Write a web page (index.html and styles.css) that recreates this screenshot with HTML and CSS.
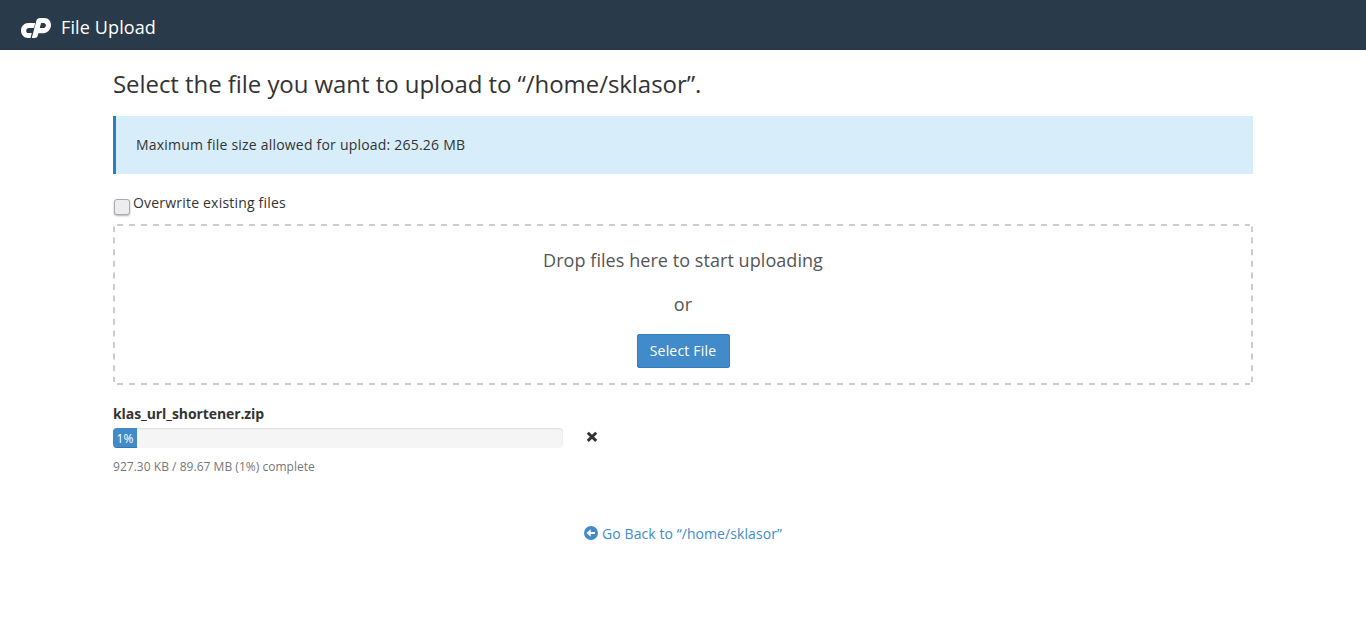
FILE: index.html
```html
<!DOCTYPE html>
<html lang="en">
<head>
<meta charset="utf-8">
<title>File Upload</title>
<link rel="stylesheet" href="styles.css">
</head>
<body>
<header class="navbar">
  <svg class="logo" viewBox="0 0 30 20" width="30" height="20" fill="#fff" aria-hidden="true">
    <path d="M14.200 5H7.400C3.200 5 0 8.300 0 12.500C0 16.800 3 20 7 20H9.500L10.800 15.100H7.300C5.900 15.100 5.200 14 5.200 12.700C5.200 11.200 6.300 10 7.800 10H12.900Z"/>
    <path d="M10.800 20L15.400 2.600C15.800 1 17.300 0 19 0H23.500C27.500 0 30 3.300 30 7C30 11.500 26.500 15.200 22.500 15.200H17.400L18.700 10.100H22.200C23.800 10.100 24.900 8.800 24.900 7.400C24.900 6 23.900 5.100 22.700 5.100H20.100L16.700 17.800C16.300 19.200 15.200 20 13.700 20Z"/>
  </svg>
  <span class="brand">File Upload</span>
</header>
<main class="container">
  <h1 class="title">Select the file you want to upload to “/home/sklasor”.</h1>
  <div class="callout">Maximum file size allowed for upload: 265.26 MB</div>
  <label class="overwrite"><span class="checkbox"></span>Overwrite existing files</label>
  <section class="dropzone">
    <svg class="dash-border" width="1140" height="161" aria-hidden="true">
      <g stroke="#ccc" stroke-width="2" fill="none">
        <path d="M4 1H1137" stroke-dasharray="6 6"/>
        <path d="M4 160H1137" stroke-dasharray="6 6"/>
        <path d="M1 2.500V158" stroke-dasharray="6 5.600" stroke-dashoffset="0.500"/>
        <path d="M1139 2.500V158" stroke-dasharray="6 5.600" stroke-dashoffset="0.500"/>
      </g>
    </svg>
    <p class="drop-text">Drop files here to start uploading</p>
    <p class="drop-text">or</p>
    <button class="btn" type="button">Select File</button>
  </section>
  <section class="upload">
    <div class="filename">klas_url_shortener.zip</div>
    <div class="progress-row">
      <div class="progress"><div class="bar">1%</div></div>
      <svg class="cancel" viewBox="0 0 12 12" width="12" height="12" aria-hidden="true"><path d="M2.300 2.200L9.700 9.300M9.700 2.200L2.300 9.300" stroke="#333" stroke-width="3.500" stroke-linecap="square" transform="translate(.9 .9) scale(.85)"/></svg>
    </div>
    <div class="status">927.30 KB / 89.67 MB (1%) complete</div>
  </section>
  <a class="back">
    <svg viewBox="0 0 14 14" width="14" height="14" aria-hidden="true"><circle cx="7" cy="7" r="7" fill="#428bca"/><path d="M2.500 7L6.700 3.200V5.900H11V8.100H6.700V10.800Z" fill="#fff"/></svg>
    <span>Go Back to “/home/sklasor”</span>
  </a>
</main>
</body>
</html>
```
FILE: styles.css
```css
* { box-sizing: border-box; }
body {
  margin: 0;
  background: #fff;
  color: #333;
  font: 14px/20px "Open Sans", sans-serif;
}
.navbar {
  display: flex;
  align-items: flex-start;
  gap: 10px;
  height: 50px;
  padding: 17px 21px 0;
  background: #293a4a;
}
.logo { margin-top: 1px; }
.brand {
  color: #fff;
  font-size: 18px;
  line-height: 20px;
  letter-spacing: .12px;
}
.container {
  display: flex;
  flex-direction: column;
  width: 1140px;
  margin: 0 auto;
}
.title {
  margin: 20px 0 18px;
  font-size: 24px;
  font-weight: 400;
  line-height: 28px;
  letter-spacing: -.06px;
}
.callout {
  height: 58px;
  padding: 19px 20px;
  border-left: 3px solid #2980b9;
  background: #d7edf9;
  letter-spacing: .21px;
}
.overwrite {
  display: flex;
  gap: 3px;
  height: 31px;
  margin-top: 19px;
  padding-left: 1px;
  letter-spacing: .2px;
}
.checkbox {
  width: 16px;
  height: 16px;
  margin-top: 6px;
  border: 1px solid #aaa;
  border-radius: 3px;
  background: #ededf0;
  box-shadow: 0 1px 2px rgba(0, 0, 0, .3);
}
.dropzone {
  position: relative;
  display: flex;
  flex-direction: column;
  align-items: center;
  height: 161px;
  padding-top: 24px;
}
.dash-border {
  position: absolute;
  inset: 0;
}
.drop-text {
  margin: 0 0 19px;
  color: #555;
  font-size: 18px;
  line-height: 25px;
  letter-spacing: .06px;
}
.btn {
  width: 93px;
  height: 34px;
  margin-top: -2px;
  padding: 0;
  border: 1px solid #357ebd;
  border-radius: 2px;
  background: #428bca;
  color: #fff;
  font: inherit;
  letter-spacing: .2px;
}
.upload { padding-top: 19px; }
.filename {
  font-weight: 700;
  letter-spacing: -.09px;
}
.progress-row {
  display: flex;
  gap: 23px;
  height: 20px;
  margin-top: 4px;
}
.progress {
  width: 450px;
  overflow: hidden;
  border-radius: 4px;
  background: #f5f5f5;
  box-shadow: inset 0 1px 2px rgba(0, 0, 0, .1);
}
.bar {
  width: 24px;
  height: 20px;
  padding-top: 1px;
  background: #428bca;
  box-shadow: inset 0 -1px 0 rgba(0, 0, 0, .15);
  color: #fff;
  font-size: 12px;
  line-height: 20px;
  text-align: center;
}
.cancel { margin-top: 3px; }
.status {
  margin-top: 9px;
  color: #777;
  font-size: 12px;
  letter-spacing: .03px;
}
.back {
  display: flex;
  justify-content: center;
  gap: 4px;
  margin-top: 47px;
  color: #428bca;
  letter-spacing: .075px;
}
.back svg { margin-top: 2px; }
```
